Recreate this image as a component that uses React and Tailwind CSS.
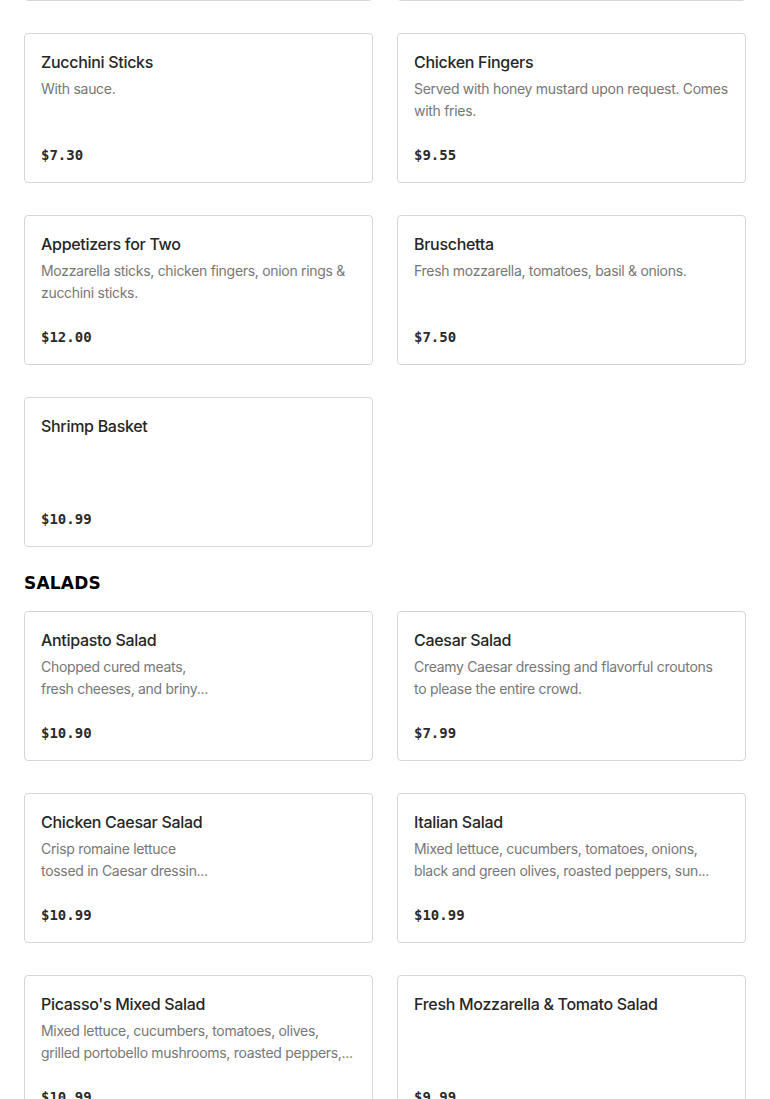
import React from "react";

const appetizers = [
  { name: "Zucchini Sticks", desc: ["With sauce."], price: "$7.30" },
  { name: "Chicken Fingers", desc: ["Served with honey mustard upon request. Comes", "with fries."], price: "$9.55" },
  { name: "Appetizers for Two", desc: ["Mozzarella sticks, chicken fingers, onion rings &", "zucchini sticks."], price: "$12.00" },
  { name: "Bruschetta", desc: ["Fresh mozzarella, tomatoes, basil & onions."], price: "$7.50" },
  { name: "Shrimp Basket", desc: [], price: "$10.99" },
];

const salads = [
  { name: "Antipasto Salad", desc: ["Chopped cured meats,", "fresh cheeses, and briny..."], price: "$10.90" },
  { name: "Caesar Salad", desc: ["Creamy Caesar dressing and flavorful croutons", "to please the entire crowd."], price: "$7.99" },
  { name: "Chicken Caesar Salad", desc: ["Crisp romaine lettuce", "tossed in Caesar dressin..."], price: "$10.99" },
  { name: "Italian Salad", desc: ["Mixed lettuce, cucumbers, tomatoes, onions,", "black and green olives, roasted peppers, sun..."], price: "$10.99" },
  { name: "Picasso's Mixed Salad", desc: ["Mixed lettuce, cucumbers, tomatoes, olives,", "grilled portobello mushrooms, roasted peppers,..."], price: "$10.99" },
  { name: "Fresh Mozzarella & Tomato Salad", desc: [], price: "$9.99" },
];

function Card({ item }) {
  return (
    <div className="flex h-[150px] flex-col rounded-[4px] border border-[#d6d6d6] bg-white px-4 pt-4 pb-[17px]">
      {item && (
        <>
          <div className="text-[16px] leading-6 font-medium text-[#262626] tracking-[-0.3px]">{item.name}</div>
          <div className="mt-1 text-[14px] leading-[22px] text-[#777777] tracking-[-0.3px]">
            {item.desc.map((l, i) => (
              <div key={i} className="whitespace-nowrap">{l}</div>
            ))}
          </div>
          <div
            className="mt-auto text-[14px] leading-5 font-bold text-[#2a2a2a]"
            style={{ fontFamily: '"DejaVu Sans Mono", "Liberation Mono", monospace' }}
          >
            {item.price}
          </div>
        </>
      )}
    </div>
  );
}

export default function App() {
  return (
    <div className="min-h-[1099px] overflow-hidden bg-white px-6" style={{ fontFamily: 'Inter, "Noto Sans", sans-serif' }}>
      <div className="mt-[-149px] grid grid-cols-2 gap-x-6 gap-y-8">
        <Card />
        <Card />
        {appetizers.map((it) => (
          <Card key={it.name} item={it} />
        ))}
      </div>
      <h2
        className="mt-6 mb-4 text-[17px] leading-6 font-bold text-black tracking-[0.2px]"
        style={{ fontFamily: '"DejaVu Sans", sans-serif' }}
      >
        SALADS
      </h2>
      <div className="grid grid-cols-2 gap-x-6 gap-y-8">
        {salads.map((it) => (
          <Card key={it.name} item={it} />
        ))}
      </div>
    </div>
  );
}
